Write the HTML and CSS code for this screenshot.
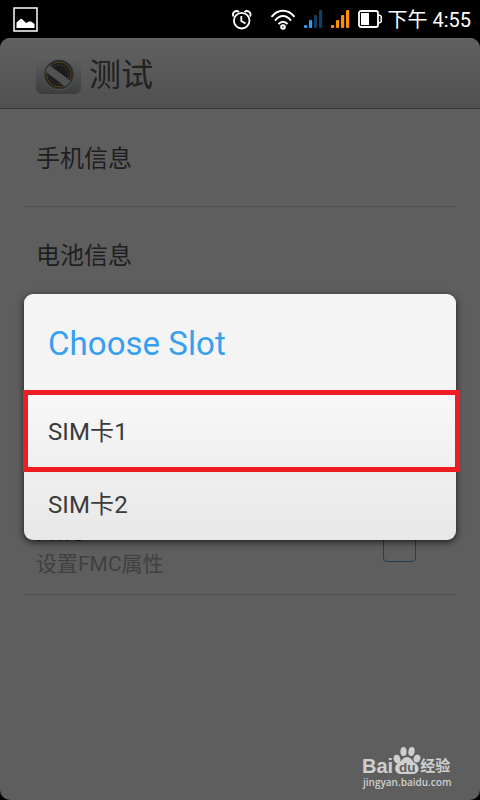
FILE: index.html
```
<!DOCTYPE html>
<html lang="zh-CN">
<head>
	<meta charset="utf-8">
	<title>测试</title>
	<link rel="stylesheet" href="styles.css">
</head>
<body>
	<div class="status-bar">
		<svg class="picture-icon" width="25" height="25" viewBox="0 0 25 25">
			<rect x="1" y="1" width="23" height="23" fill="none" stroke="#fff" stroke-width="1.5"/>
			<path d="M3.500 21v-5.500l4-3.500h1.500l4 4 3-1.500h2l3.500 2.500v4z" fill="#fff"/>
		</svg>
		<div class="status-right">
			<svg class="alarm-icon" width="20" height="20" viewBox="0 0 20 20" fill="none" stroke="#fff" stroke-width="1.8">
				<circle cx="9.700" cy="10.700" r="7.800"/>
				<path d="M9.300 6v5l4.200 2.500"/>
				<path d="M1.500 6.500c-2-4 2.500-7 5.500-4.500M18 6.500c2-4-2.500-7-5.500-4.500"/>
			</svg>
			<svg class="wifi-icon" width="26" height="22" viewBox="0 0 26 22" fill="none" stroke="#fff" stroke-width="2">
				<path d="M1.500 7.800C8-.3 18-.3 24.500 7.800M5 11.600C10 5.500 16 5.500 21 11.600M8.500 15.200c2.800-3.400 6.200-3.400 9 0"/>
				<circle cx="13" cy="18" r="1.800"/>
			</svg>
			<svg class="signal-icon" width="19" height="19" viewBox="0 0 19 19">
				<g fill="#2e9df0"><rect x="0" y="15" width="3.200" height="3" rx="1"/><rect x="5" y="10" width="3.200" height="8" rx="1"/></g>
				<g fill="#123f61"><rect x="10" y="5" width="3.200" height="13" rx="1"/><rect x="15" y="0" width="3.200" height="18" rx="1"/></g>
			</svg>
			<svg class="signal-icon" width="19" height="19" viewBox="0 0 19 19" fill="#ff9000">
				<rect x="0" y="15" width="3.200" height="3" rx="1"/><rect x="5" y="10" width="3.200" height="8" rx="1"/>
				<rect x="10" y="5" width="3.200" height="13" rx="1"/><rect x="15" y="0" width="3.200" height="18" rx="1"/>
			</svg>
			<svg class="battery-icon" width="24" height="18" viewBox="0 0 24 18">
				<rect x="1" y="1" width="19" height="16" rx="2" fill="none" stroke="#fff" stroke-width="1.800"/>
				<rect x="3" y="3" width="8" height="12" fill="#fff"/>
				<path d="M20 5c4 0 3.500 2 3 4 .5 2 1 4-3 4" fill="none" stroke="#fff" stroke-width="1.500"/>
			</svg>
			<span class="clock">下午 4:55</span>
		</div>
	</div>

	<div class="screen">
		<header class="title-bar">
			<svg class="app-icon" width="45" height="38" viewBox="0 0 45 38">
				<defs>
					<linearGradient id="plate" x1="0" y1="0" x2="0" y2="1">
						<stop offset="0" stop-color="#5f5f5f"/>
						<stop offset="1" stop-color="#3b3d3e"/>
					</linearGradient>
					<clipPath id="dial"><circle cx="23" cy="18.500" r="13.500"/></clipPath>
				</defs>
				<rect width="45" height="38" rx="6" fill="url(#plate)"/>
				<circle cx="23" cy="19" r="15.500" fill="#505152"/>
				<circle cx="23" cy="18.500" r="14" fill="#1b1b1b" stroke="#303132" stroke-width="1.500"/>
				<circle cx="23" cy="18.500" r="12.300" fill="none" stroke="#5a441c" stroke-width="1"/>
				<circle cx="23" cy="18.500" r="9.500" fill="none" stroke="#363636" stroke-width="2" stroke-dasharray="1 1.500"/>
				<path d="M9 11l4-2 22 16v5l-4 2L10 16z" fill="#505152" clip-path="url(#dial)"/>
			</svg>
			<h1>测试</h1>
		</header>

		<ul class="settings">
			<li>手机信息</li>
			<li>电池信息</li>
			<li></li>
			<li></li>
			<li>
				<div class="setting-text">
					<div class="setting-name">FMC</div>
					<div class="summary">设置FMC属性</div>
				</div>
				<span class="checkbox"></span>
			</li>
		</ul>

		<div class="watermark">
			<div class="brand">
				<span class="brand-bai">Bai</span>
				<svg width="30" height="29" viewBox="0 0 30 29" fill="#cfcfcf">
					<ellipse cx="4" cy="13" rx="3.300" ry="4.300" transform="rotate(-15 4 13)"/>
					<ellipse cx="10.500" cy="5.500" rx="3.100" ry="4.500"/>
					<ellipse cx="18.500" cy="5.500" rx="3.100" ry="4.500" transform="rotate(10 18.500 5.500)"/>
					<ellipse cx="24" cy="12.500" rx="3.300" ry="4" transform="rotate(20 24 12.500)"/>
					<path d="M14 11c4 0 5 4 8 6 6 4 4 11-2 11H8c-6 0-8-7-3-11 4-2 5-6 9-6z"/>
					<text class="du" x="6" y="25.500">du</text>
				</svg>
				<span class="brand-cn">经验</span>
			</div>
			<div class="site">jingyan.baidu.com</div>
		</div>
	</div>

	<div class="dialog">
		<h2>Choose Slot</h2>
		<div class="slot">SIM卡1</div>
		<div class="slot">SIM卡2</div>
		<div class="highlight"></div>
	</div>
</body>
</html>
```
FILE: styles.css
```
* {
	box-sizing: border-box;
}
body {
	margin: 0;
	width: 480px;
	height: 800px;
	background: #000;
	font-family: Roboto, "Noto Sans CJK SC", sans-serif;
	position: relative;
	overflow: hidden;
}
h1, h2 {
	margin: 0;
	font-weight: 400;
}
.status-bar {
	height: 38px;
	padding: 1px 9px 0 13px;
	display: flex;
	align-items: center;
	justify-content: space-between;
	color: #fff;
}
.status-right {
	display: flex;
	align-items: center;
}
.alarm-icon {
	margin-right: 18px;
}
.wifi-icon {
	margin-right: 8px;
}
.signal-icon {
	margin-right: 8px;
}
.battery-icon {
	margin: 0 5px 2px 0;
}
.clock {
	font-size: 20px;
	line-height: 38px;
	white-space: nowrap;
}
.screen {
	height: 762px;
	background: #5e5e5e;
	border-radius: 10px;
	overflow: hidden;
	position: relative;
}
.title-bar {
	height: 71px;
	padding: 3px 0 0 36px;
	display: flex;
	align-items: center;
	gap: 8px;
	background: linear-gradient(#616161, #505050);
	border-bottom: 1px solid #383838;
}
.title-bar h1 {
	font-size: 32px;
	line-height: 60px;
	color: #212121;
}
.settings {
	list-style: none;
	margin: 0 24px;
	padding: 0;
}
.settings li {
	height: 97px;
	padding: 2px 40px 0 12px;
	display: flex;
	align-items: center;
	justify-content: space-between;
	border-bottom: 1px solid #505050;
	font-size: 24px;
	line-height: 32px;
	color: #1f1f1f;
}
.settings li:first-child {
	height: 98px;
}
.settings li:last-child {
	padding-top: 0;
}
.setting-text {
	padding-top: 4px;
}
.setting-name {
	font-size: 24px;
	line-height: 31px;
}
.summary {
	font-size: 21px;
	line-height: 28px;
	color: #404040;
	padding-top: 1px;
}
.checkbox {
	width: 33px;
	height: 33px;
	margin-bottom: 1px;
	border: 1px solid #1f3d56;
	border-radius: 4px;
}
.dialog {
	position: absolute;
	left: 24px;
	top: 294px;
	width: 432px;
	height: 246px;
	border-radius: 9px;
	background: linear-gradient(#f4f4f4 96px, #f8f8f8 96px, #e8e8e8);
	box-shadow: 0 2px 7px rgba(0, 0, 0, 0.7);
}
.dialog h2 {
	height: 102px;
	padding-left: 24px;
	font-size: 33px;
	line-height: 100px;
	letter-spacing: 0.05px;
	color: #379ff0;
}
.slot {
	height: 73px;
	padding-left: 24px;
	font-size: 24px;
	line-height: 73px;
	letter-spacing: 0.1px;
	color: #3a3a3a;
}
/* red frame around the first slot */
.highlight {
	position: absolute;
	left: -1px;
	top: 96px;
	width: 437px;
	height: 82px;
	border: 5px solid #ef1c24;
}
.watermark {
	position: absolute;
	left: 362px;
	top: 708px;
	color: #cfcfcf;
	font-family: "Liberation Sans", "Noto Sans CJK SC", sans-serif;
}
.brand {
	height: 29px;
	display: flex;
	align-items: flex-end;
	font-weight: 700;
	line-height: 18px;
}
.brand-bai {
	font-size: 20px;
}
.brand-cn {
	font-size: 15px;
	line-height: 18px;
	margin-left: -3px;
	white-space: nowrap;
}
.du {
	font: 700 13.5px "Liberation Sans", sans-serif;
	fill: #5e5e5e;
}
.site {
	font: 600 10px/14px "Open Sans", sans-serif;
	padding-left: 1px;
}
```
